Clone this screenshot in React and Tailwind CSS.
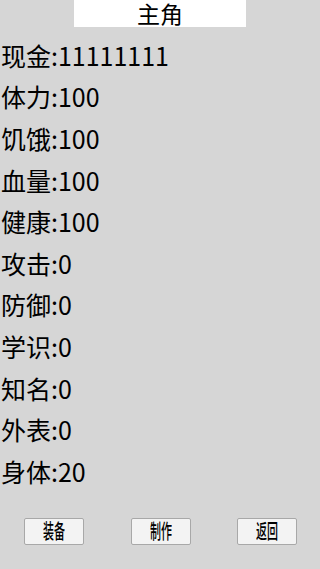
import React from 'react'

const stats = [
    ['现金', '11111111'],
    ['体力', '100'],
    ['饥饿', '100'],
    ['血量', '100'],
    ['健康', '100'],
    ['攻击', '0'],
    ['防御', '0'],
    ['学识', '0'],
    ['知名', '0'],
    ['外表', '0'],
    ['身体', '20'],
]

const buttons = ['装备', '制作', '返回']

export default function App() {
    return (
        <div
            className="w-[320px] h-[569px] bg-[#d6d6d6] text-black overflow-hidden"
            style={{ fontFamily: '"Noto Sans CJK SC", "Noto Sans", sans-serif' }}
        >
            <div className="flex justify-center">
                <div className="w-[172px] h-[27px] bg-white flex items-center justify-center text-[23px] leading-[27px]">
                    主角
                </div>
            </div>
            <div className="mt-[7px] flex flex-col">
                {stats.map(([label, value]) => (
                    <div key={label} className="h-[41.6px] flex items-center pl-[1px] text-[25px] leading-[30px]">
                        {label}:{value}
                    </div>
                ))}
            </div>
            <div className="mt-[26px] flex justify-between pl-[24px] pr-[23px]">
                {buttons.map((b) => (
                    <div
                        key={b}
                        className="w-[60px] h-[27px] bg-[#f3f3f3] border border-[#a8a8a8] rounded-[2px] flex items-center justify-center"
                    >
                        <span className="inline-block text-[20px] leading-[24px] scale-x-[0.55] font-medium">{b}</span>
                    </div>
                ))}
            </div>
        </div>
    )
}
